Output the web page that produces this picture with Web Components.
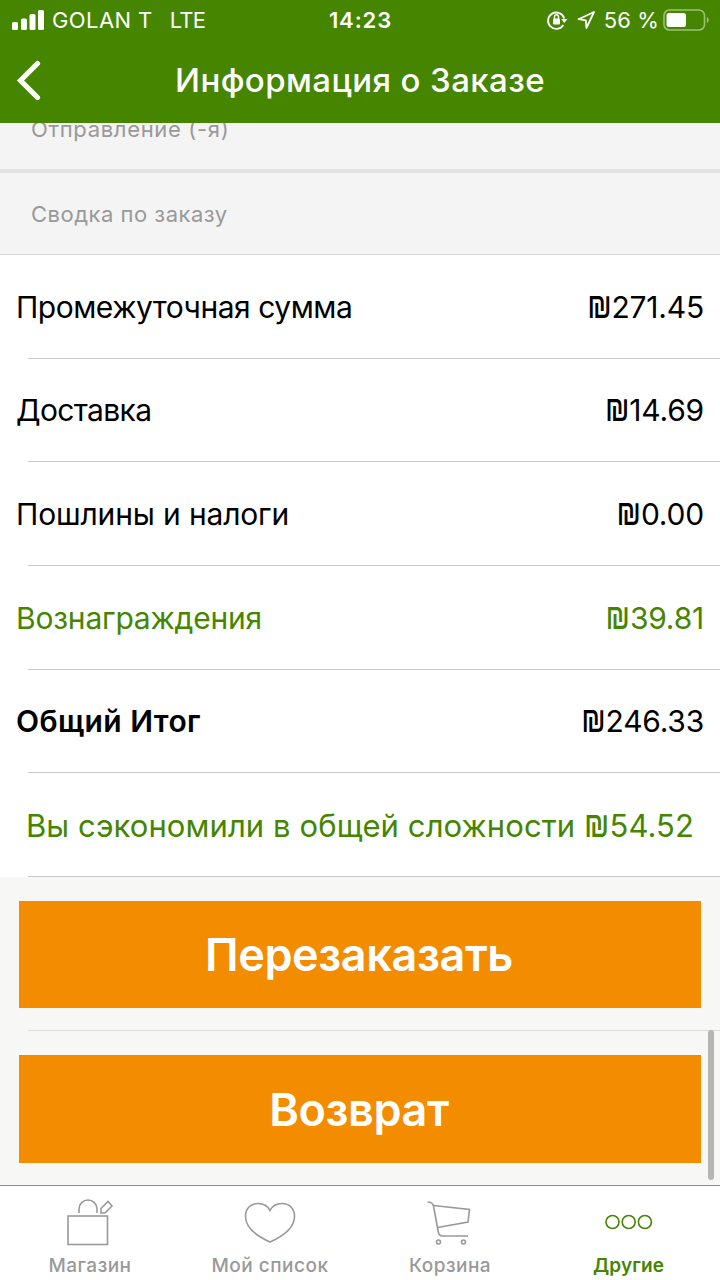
<!DOCTYPE html>
<html lang="ru">
<head>
<meta charset="utf-8">
<title>Информация о Заказе</title>
<style>
    body {
        margin: 0;
        font-family: Inter, "Liberation Sans", sans-serif;
        color: #000;
        background: #fff;
    }
</style>
</head>
<body>
<order-page>
    <status-bar slot="top" carrier="GOLAN T" network="LTE" time="14:23" battery="56 %"></status-bar>
    <nav-header slot="top">Информация о Заказе</nav-header>

    <section-title class="first" style="--spacing: .67px">Отправление (-я)</section-title>
    <section-title style="--spacing: .5px">Сводка по заказу</section-title>

    <summary-row label="Промежуточная сумма" amount="₪271.45" style="--spacing: -.48px"></summary-row>
    <summary-row label="Доставка" amount="₪14.69" class="short" style="--spacing: -.65px"></summary-row>
    <summary-row label="Пошлины и налоги" amount="₪0.00" style="--spacing: -.15px"></summary-row>
    <summary-row label="Вознаграждения" amount="₪39.81" class="green" style="--spacing: -.2px"></summary-row>
    <summary-row label="Общий Итог" amount="₪246.33" class="short total" style="--spacing: .42px"></summary-row>
    <summary-row label="Вы сэкономили в общей сложности ₪54.52" class="green saved" style="--spacing: .1px"></summary-row>

    <action-button>Перезаказать</action-button>
    <action-button class="last">Возврат</action-button>

    <tab-bar slot="bottom">
        <tab-item icon="shop">Магазин</tab-item>
        <tab-item icon="heart">Мой список</tab-item>
        <tab-item icon="cart">Корзина</tab-item>
        <tab-item icon="more" class="active">Другие</tab-item>
    </tab-bar>
</order-page>

<script>
class OrderPage extends HTMLElement {

    constructor() {
        super()
        this.root = this.attachShadow({mode: 'open'})
        this.root.innerHTML = `
            <style>
                :host {
                    display: flex;
                    flex-direction: column;
                    width: 720px;
                    height: 1280px;
                    overflow: hidden;
                }
                main {
                    position: relative;
                    flex: 1;
                    min-height: 0;
                    overflow: hidden;
                    background: #f7f7f6;
                }
                .thumb {
                    position: absolute;
                    right: 6px;
                    bottom: 5px;
                    width: 6px;
                    height: 150px;
                    border-radius: 3px;
                    background: #b5b5b4;
                }
            </style>
            <slot name="top"></slot>
            <main>
                <slot></slot>
                <div class="thumb"></div>
            </main>
            <slot name="bottom"></slot>`
    }

}

class StatusBar extends HTMLElement {

    constructor() {
        super()
        this.root = this.attachShadow({mode: 'open'})
    }

    connectedCallback() {
        this.root.innerHTML = `
            <style>
                :host {
                    display: grid;
                    grid-template-columns: 1fr auto 1fr;
                    align-items: center;
                    height: 40px;
                    padding: 0 11px 0 12px;
                    box-sizing: border-box;
                    color: #fff;
                    background: #458500;
                    font-size: 22px;
                    line-height: 40px;
                    white-space: nowrap;
                }
                div {
                    display: flex;
                    align-items: center;
                }
                svg {
                    display: block;
                    flex: none;
                }
                .carrier {
                    margin-left: 8px;
                    letter-spacing: .4px;
                }
                .network {
                    margin-left: 17px;
                    letter-spacing: -.7px;
                }
                .time {
                    font-weight: 600;
                    letter-spacing: .9px;
                }
                .right {
                    justify-content: flex-end;
                }
                .battery {
                    margin: 0 4px 0 7px;
                    letter-spacing: .1px;
                }
            </style>
            <div>
                <svg width="32" height="20" viewBox="0 0 32 20" fill="#fff">
                    <rect x="0" y="12" width="6" height="8" rx="1.6"/>
                    <rect x="9" y="8.500" width="6" height="11.500" rx="1.6"/>
                    <rect x="17.500" y="4" width="6" height="16" rx="1.6"/>
                    <rect x="26" y="0" width="6" height="20" rx="1.6"/>
                </svg>
                <span class="carrier">${this.getAttribute('carrier')}</span>
                <span class="network">${this.getAttribute('network')}</span>
            </div>
            <span class="time">${this.getAttribute('time')}</span>
            <div class="right">
                <svg width="51" height="22" viewBox="0 0 51 22" fill="none" stroke="#fff" stroke-width="1.8">
                    <path d="M17.300 16A8.200 8.200 0 1 1 18.200 9.500"/>
                    <path d="M15.200 10h6.200l-3.100 4z" fill="#fff" stroke="none"/>
                    <rect x="7" y="9.500" width="7" height="6" rx="1" fill="#fff" stroke="none"/>
                    <path d="M8.500 10V7.700a2 2 0 0 1 4 0V10" stroke-width="1.4"/>
                    <path d="M48 3L32.500 10.200l7.300 1.200.6 7.600z" stroke-linejoin="round"/>
                </svg>
                <span class="battery">${this.getAttribute('battery')}</span>
                <svg width="46" height="22" viewBox="0 0 46 22">
                    <rect x="1" y="1" width="40.500" height="20" rx="5.500" fill="none" stroke="#9dc078" stroke-width="1.600"/>
                    <rect x="3.500" y="4" width="19.500" height="14" rx="2.500" fill="#fff"/>
                    <path d="M43.800 8v6q2-1 2-3t-2-3z" fill="#9dc078"/>
                </svg>
            </div>`
    }

}

class NavHeader extends HTMLElement {

    constructor() {
        super()
        this.root = this.attachShadow({mode: 'open'})
        this.root.innerHTML = `
            <style>
                :host {
                    display: grid;
                    grid-template-columns: 60px 1fr 60px;
                    align-items: center;
                    height: 83px;
                    padding-bottom: 2px;
                    box-sizing: border-box;
                    color: #fff;
                    background: #458500;
                    font-size: 33px;
                    font-weight: 500;
                    text-align: center;
                    white-space: nowrap;
                    letter-spacing: .4px;
                }
                svg {
                    display: block;
                    margin-left: 16px;
                }
                span {
                    padding-bottom: 2px;
                }
            </style>
            <svg width="26" height="42" viewBox="0 0 26 42" fill="none" stroke="#fff" stroke-width="5.2" stroke-linecap="round" stroke-linejoin="miter">
                <path d="M21.500 3.500L4.500 20.500l17 17"/>
            </svg>
            <span><slot></slot></span>`
    }

}

class SectionTitle extends HTMLElement {

    constructor() {
        super()
        this.root = this.attachShadow({mode: 'open'})
        this.root.innerHTML = `
            <style>
                :host {
                    display: flex;
                    align-items: center;
                    height: 82px;
                    box-sizing: border-box;
                    padding-left: 31px;
                    border-bottom: 1px solid #d8d8d8;
                    background: #f4f4f4;
                    color: #999;
                    font-size: 22px;
                    letter-spacing: var(--spacing);
                }
                /* scrolled halfway under the header */
                :host(.first) {
                    height: 84px;
                    margin-top: -34px;
                    border-bottom: 4px solid #e2e2e2;
                }
            </style>
            <slot></slot>`
    }

}

class SummaryRow extends HTMLElement {

    constructor() {
        super()
        this.root = this.attachShadow({mode: 'open'})
    }

    // Inter's shekel sign is lower than the digits, stretch it to cap height
    money(text) {
        return (text || '').replace('₪', '<span class="shekel">₪</span>')
    }

    connectedCallback() {
        this.root.innerHTML = `
            <style>
                :host {
                    display: flex;
                    flex-direction: column;
                    height: 104px;
                    background: #fff;
                    font-size: 30px;
                }
                :host(.short) {
                    height: 103px;
                }
                :host(.green) {
                    color: #458500;
                }
                .line {
                    display: flex;
                    flex: 1;
                    align-items: center;
                    justify-content: space-between;
                    padding: 0 16px;
                    line-height: 36px;
                    white-space: nowrap;
                }
                .label {
                    letter-spacing: var(--spacing, 0);
                }
                :host(.total) .label {
                    font-weight: 600;
                }
                :host(.saved) .line {
                    justify-content: center;
                    padding-top: 2px;
                    font-size: 31px;
                }
                .amount {
                    letter-spacing: -.2px;
                }
                .shekel {
                    display: inline-block;
                    transform: scaleY(1.3);
                    transform-origin: 0 80%;
                }
                .rule {
                    height: 1px;
                    margin-left: 28px;
                    background: #c8c8c8;
                }
            </style>
            <div class="line">
                <span class="label">${this.money(this.getAttribute('label'))}</span>
                ${this.hasAttribute('amount') ? `<span class="amount">${this.money(this.getAttribute('amount'))}</span>` : ''}
            </div>
            <div class="rule"></div>`
    }

}

class ActionButton extends HTMLElement {

    constructor() {
        super()
        this.root = this.attachShadow({mode: 'open'})
        this.root.innerHTML = `
            <style>
                :host {
                    display: block;
                    height: 154px;
                    box-sizing: border-box;
                    padding-top: 24px;
                }
                button {
                    display: block;
                    width: 682px;
                    height: 107px;
                    margin: 0 19px 22px;
                    padding: 0 2px 0 0;
                    border: 0;
                    background: #f48c00;
                    color: #fff;
                    font: 600 45px Inter, "Liberation Sans", sans-serif;
                    letter-spacing: -.4px;
                }
                .rule {
                    height: 1px;
                    margin-left: 28px;
                    background: #dcdcdc;
                }
                :host(.last) button {
                    height: 108px;
                    margin-bottom: 0;
                }
                :host(.last) .rule {
                    display: none;
                }
            </style>
            <button><slot></slot></button>
            <div class="rule"></div>`
    }

}

class TabBar extends HTMLElement {

    constructor() {
        super()
        this.root = this.attachShadow({mode: 'open'})
        this.root.innerHTML = `
            <style>
                :host {
                    display: grid;
                    grid-template-columns: repeat(4, 1fr);
                    height: 95px;
                    box-sizing: border-box;
                    border-top: 1px solid #8e8e8e;
                    background: #fff;
                }
            </style>
            <slot></slot>`
    }

}

const icons = {
    shop: `
        <rect x="8" y="29" width="39.500" height="28.500"/>
        <path d="M19 26v-4a9 9 0 0 1 18 0v4"/>
        <path d="M41 26v-4.500l7-7 4 4.500-7 7z"/>`,
    heart: `
        <path d="M30 23.500C27.500 18.500 23 16.500 18 16.500C10.500 16.500 5.500 21.500 5.500 29.500C5.500 41 15.500 48.500 30 55C44.500 48.500 54.500 41 54.500 29.500C54.500 21.500 49.500 16.500 42 16.500C37 16.500 32.500 18.500 30 23.500Z"/>`,
    cart: `
        <path d="M7.500 15q5 0 6 4l4.800 26q.7 4 4.200 4H48"/>
        <path d="M13.500 18.500L49.500 22.500l-1.500 12.500-30.500 5.500"/>
        <circle cx="18.500" cy="55" r="2"/>
        <circle cx="43.500" cy="55" r="2"/>`,
    more: `
        <circle cx="13.500" cy="35" r="6.500"/>
        <circle cx="29.700" cy="35" r="6.500"/>
        <circle cx="45.900" cy="35" r="6.500"/>`
}

class TabItem extends HTMLElement {

    constructor() {
        super()
        this.root = this.attachShadow({mode: 'open'})
    }

    connectedCallback() {
        this.root.innerHTML = `
            <style>
                :host {
                    display: flex;
                    flex-direction: column;
                    align-items: center;
                    padding-top: 1px;
                    color: #999;
                    font-size: 19px;
                    font-weight: 500;
                    line-height: 24px;
                    letter-spacing: .5px;
                    white-space: nowrap;
                }
                :host(.active) {
                    padding-right: 3px;
                    color: #458500;
                    font-weight: 600;
                    letter-spacing: .1px;
                }
                svg {
                    display: block;
                    margin-bottom: 5px;
                }
            </style>
            <svg width="60" height="62" viewBox="0 0 60 62" fill="none" stroke="currentColor" stroke-width="1.600">
                ${icons[this.getAttribute('icon')]}
            </svg>
            <span><slot></slot></span>`
    }

}

customElements.define('order-page', OrderPage)
customElements.define('status-bar', StatusBar)
customElements.define('nav-header', NavHeader)
customElements.define('section-title', SectionTitle)
customElements.define('summary-row', SummaryRow)
customElements.define('action-button', ActionButton)
customElements.define('tab-bar', TabBar)
customElements.define('tab-item', TabItem)
</script>
</body>
</html>
